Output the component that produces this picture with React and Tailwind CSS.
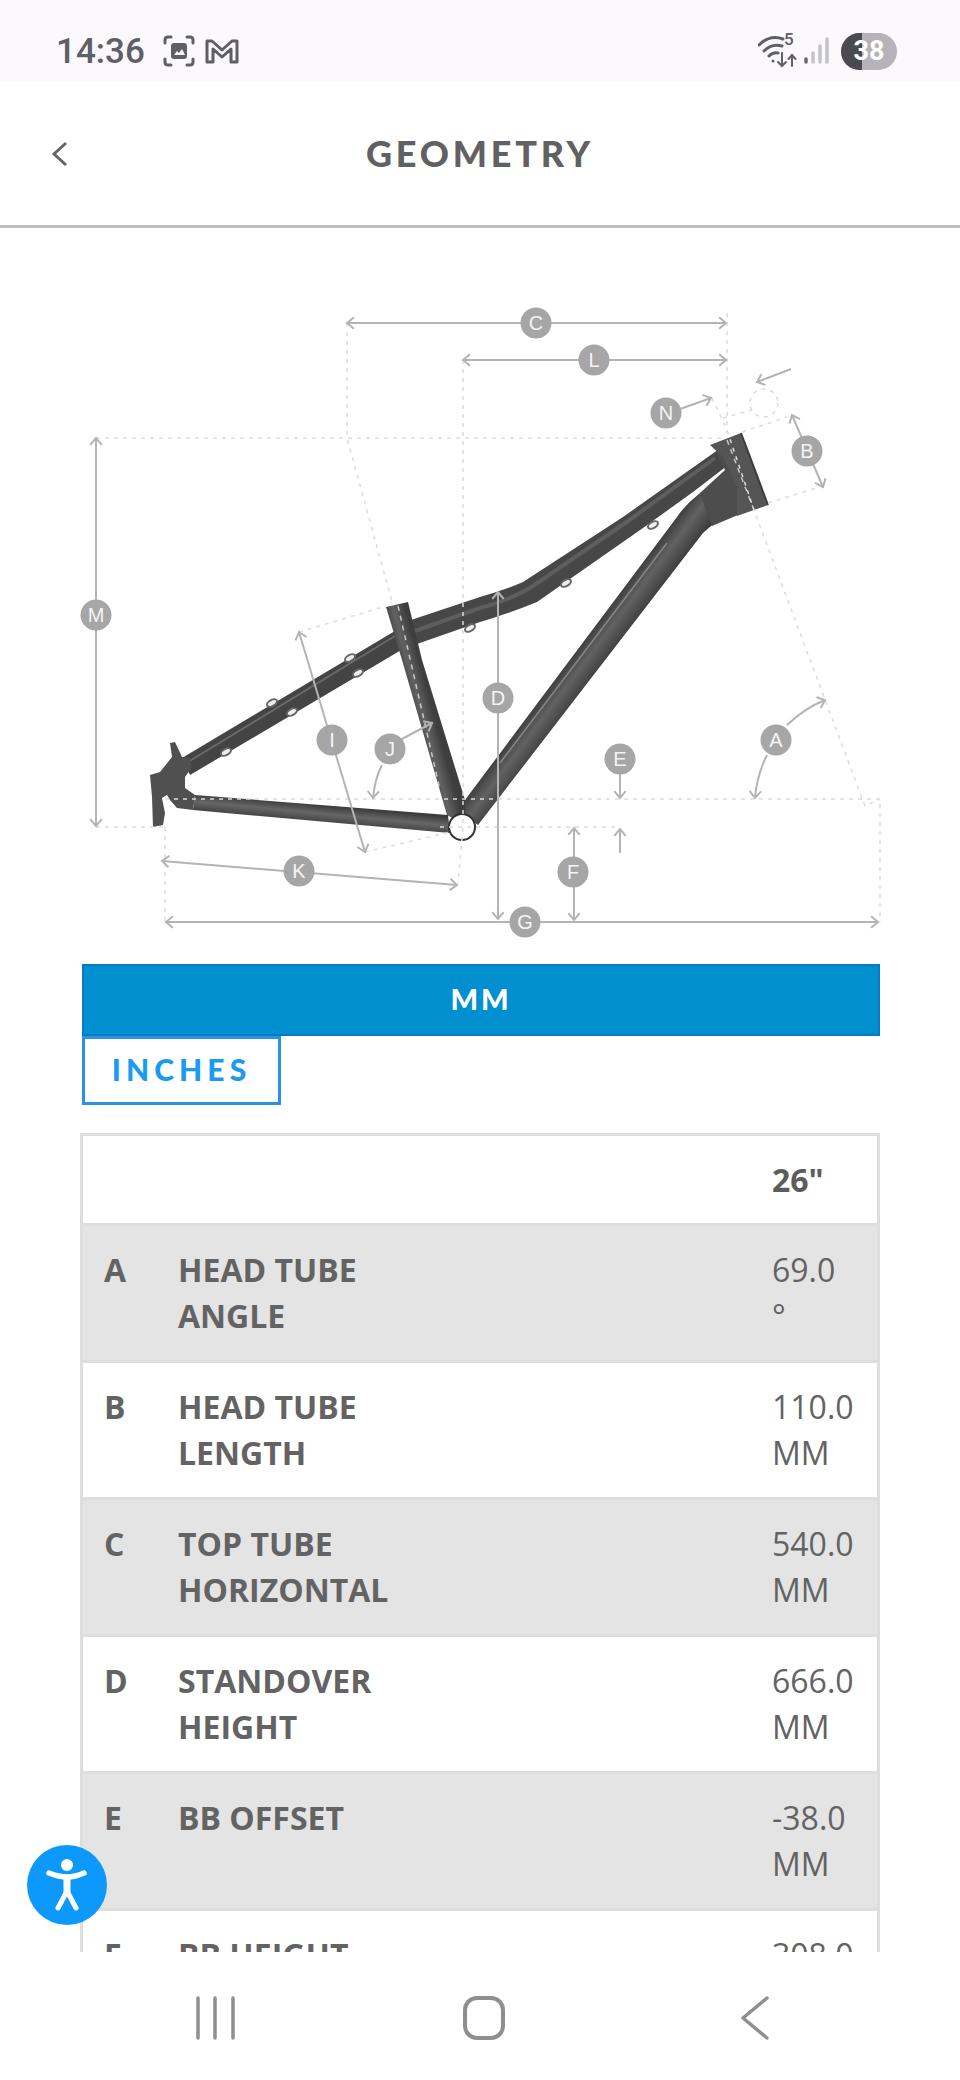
const rows = [
  { id: "A", name: "HEAD TUBE ANGLE", value: "69.0 °" },
  { id: "B", name: "HEAD TUBE LENGTH", value: "110.0 MM" },
  { id: "C", name: "TOP TUBE HORIZONTAL", value: "540.0 MM" },
  { id: "D", name: "STANDOVER HEIGHT", value: "666.0 MM" },
  { id: "E", name: "BB OFFSET", value: "-38.0 MM" },
  { id: "F", name: "BB HEIGHT", value: "308.0 MM" },
];

// straight dimension lines, last point gets the arrow head
const arrows = [
  [347, 323, 726, 323, true],
  [463, 360, 726, 360, true],
  [680, 409, 711, 398],
  [791, 369, 757, 382],
  [792, 415, 823, 487, true],
  [96, 438, 96, 826, true],
  [299, 632, 365, 852, true],
  [400, 740, 432, 723],
  [162, 861, 457, 885, true],
  [498, 592, 498, 919, true],
  [166, 922, 878, 922, true],
  [620, 770, 620, 798],
  [620, 853, 620, 829],
  [574, 828, 574, 920, true],
];

const dashes = [
  "M347 323V438L393 605",
  "M463 360V827L458 883",
  "M727 313V433",
  "M96 438H725",
  "M96 827H165M165 827V922M440 827H620",
  "M165 799H880V922",
  "M712 398L727 430L755 513L865 806L880 799",
  "M299 632L386 606",
  "M365 852L450 832",
  "M723 418L752 410",
  "M742 432L787 417",
  "M768 503L820 487",
];

const labels = [
  ["A", 776, 740], ["B", 807, 451], ["C", 536, 323], ["D", 498, 698], ["E", 620, 759],
  ["F", 573, 872], ["G", 525, 922], ["I", 332, 740], ["J", 390, 749], ["K", 299, 871],
  ["L", 594, 360], ["M", 96, 615], ["N", 666, 413],
];

const bosses = [
  [653, 525], [566, 583], [470, 628], [350, 658], [358, 673], [272, 703], [292, 712], [226, 752],
];

function ArrowHead({ x1, y1, x2, y2, size = 9 }) {
  const a = Math.atan2(y2 - y1, x2 - x1);
  const p = (d) => `${x2 + size * Math.cos(a + d)} ${y2 + size * Math.sin(a + d)}`;
  return <path d={`M${p(2.45)}L${x2} ${y2}L${p(-2.45)}`} fill="none" />;
}

function Diagram() {
  return (
    <svg width="960" height="736" viewBox="0 228 960 736" className="block shrink-0">
      <defs>
        <linearGradient id="down" gradientUnits="userSpaceOnUse" x1="568" y1="658" x2="596" y2="679">
          <stop offset="0" stopColor="#383838" />
          <stop offset="0.45" stopColor="#626262" />
          <stop offset="1" stopColor="#3a3a3a" />
        </linearGradient>
        <linearGradient id="stay" gradientUnits="userSpaceOnUse" x1="300" y1="803" x2="298" y2="824">
          <stop offset="0" stopColor="#3c3c3c" />
          <stop offset="0.4" stopColor="#666666" />
          <stop offset="1" stopColor="#353535" />
        </linearGradient>
        <linearGradient id="seat" gradientUnits="userSpaceOnUse" x1="412" y1="720" x2="434" y2="714">
          <stop offset="0" stopColor="#3e3e3e" />
          <stop offset="0.5" stopColor="#626262" />
          <stop offset="1" stopColor="#3e3e3e" />
        </linearGradient>
      </defs>

      {/* frame */}
      <path d="M400 628L182 758L190 775L408 646Z" fill="#444444" />
      <path d="M395 636L188 762" stroke="#6a6a6a" strokeWidth="2" fill="none" />
      <path d="M195 795L448 815L450 833L193 810Z" fill="url(#stay)" />
      <path
        d="M170 743L175 742L182 757L190 758L192 767L185 777L185 788L195 795L193 810L177 808L170 800L167 795L162 798L165 813L163 825L153 827L152 797L150 775L160 772L172 757Z"
        fill="#505050"
      />
      <path d="M722 447L623 517L523 582Q505 590 480 597L405 622L414 645L480 622Q505 615 537 602L643 528L693 492L732 462Z" fill="#474747" />
      <path d="M715 458L628 521L530 588Q505 602 480 608L412 632" fill="none" stroke="#5e5e5e" strokeWidth="4" />
      <path d="M700 493Q685 505 677 517L465 800V815L478 825L703 533Q720 517 740 510L735 475Z" fill="url(#down)" />
      <path d="M667 543L500 763" fill="none" stroke="#888888" strokeWidth="1.5" />
      <path d="M386 607L408 602L422 660L465 800V825L447 815L402 660Z" fill="url(#seat)" />
      <path d="M716 452L745 445L745 512L712 526L700 493L725 470Z" fill="#4d4d4d" />
      <path d="M710 445L741 433L768 505L737 516L737 487L723 457Z" fill="#555555" />
      <path d="M741 433L768 505" stroke="#3d3d3d" strokeWidth="2" />
      <path d="M727 440L754 510M398 606L440 790" stroke="#c8c8c8" strokeWidth="1.5" strokeDasharray="5 5" fill="none" />
      {bosses.map(([x, y]) => (
        <ellipse key={`${x}-${y}`} cx={x} cy={y} rx="5.500" ry="3" transform={`rotate(-30 ${x} ${y})`} fill="#eeeeee" stroke="#666666" strokeWidth="2" />
      ))}
      <circle cx="462" cy="827" r="13" fill="#ffffff" stroke="#333333" strokeWidth="2" />

      {/* dotted construction lines */}
      <g fill="none" stroke="#dcdcdc" strokeWidth="1.5" strokeDasharray="4 5">
        {dashes.map((d) => (
          <path key={d} d={d} />
        ))}
        <circle cx="764" cy="403" r="14" />
      </g>

      {/* dimensions */}
      <g fill="none" stroke="#b4b4b4" strokeWidth="2">
        {arrows.map(([x1, y1, x2, y2, both]) => (
          <g key={`${x1}-${y1}`}>
            <path d={`M${x1} ${y1}L${x2} ${y2}`} />
            <ArrowHead x1={x1} y1={y1} x2={x2} y2={y2} />
            {both && <ArrowHead x1={x2} y1={y2} x2={x1} y2={y1} />}
          </g>
        ))}
        <path d="M787 725Q805 708 825 700" />
        <ArrowHead x1={805} y1={708} x2={825} y2={700} />
        <path d="M767 755Q757 775 755 798" />
        <ArrowHead x1={756} y1={775} x2={755} y2={798} />
        <path d="M382 765Q375 778 373 798" />
        <ArrowHead x1={374} y1={778} x2={373} y2={798} />
      </g>

      {labels.map(([t, x, y]) => (
        <g key={t}>
          <circle cx={x} cy={y} r="15.5" fill="#a6a6a6" />
          <text x={x} y={y + 7} textAnchor="middle" fill="#f4f4f4" fontSize="20" fontFamily="'Liberation Sans', sans-serif">
            {t}
          </text>
        </g>
      ))}
    </svg>
  );
}

function StatusBar() {
  return (
    <div className="h-[82px] shrink-0 bg-[#fbf9fe] flex items-center pl-[56px] pr-[63px] pt-[20px] text-[#5f5f66]">
      <span className="text-[35px] font-medium leading-none font-['Roboto',sans-serif]">14:36</span>
      <svg width="34" height="34" viewBox="0 0 34 34" className="ml-[17px]" fill="none" stroke="#5f5f66" strokeWidth="3" strokeLinecap="round">
        <path d="M3 9V6Q3 3 6 3H9M25 3H28Q31 3 31 6V9M31 25V28Q31 31 28 31H25M9 31H6Q3 31 3 28V25" />
        <rect x="9" y="9" width="16" height="16" rx="3" fill="#5f5f66" stroke="none" />
        <path d="M12 21L15 17L17 19L20 15L23 21Z" fill="#fbf9fe" stroke="none" />
      </svg>
      <svg width="34" height="26" viewBox="0 0 34 26" className="ml-[9px]" fill="none" stroke="#5f5f66" strokeWidth="3" strokeLinejoin="round">
        <path d="M2 24V3H7L17 12L27 3H32V24H26V11L17 19L8 11V24Z" />
      </svg>
      <div className="ml-auto flex items-center">
        <div className="relative w-[40px] h-[34px]">
          <svg width="40" height="34" viewBox="0 0 40 34" fill="none" stroke="#5f5f66" strokeWidth="3" strokeLinecap="round">
            <path d="M1 11Q12 0 25 5M6 17Q14 9 24 12M11 22Q15 18 20 19" />
            <circle cx="15" cy="27" r="1.5" fill="#5f5f66" stroke="none" />
            <path d="M24 19V32M20 28L24 32L28 28M34 32V22M30.500 25L34 21L37.500 25" strokeWidth="2" />
          </svg>
          <span className="absolute left-[26px] top-[-3px] text-[17px] leading-none font-medium font-['Roboto',sans-serif]">5</span>
        </div>
        <svg width="28" height="28" viewBox="0 0 28 28" className="ml-[6px]" fill="none" strokeWidth="3.500" strokeLinecap="round">
          <path d="M2 22V25" stroke="#66666c" />
          <path d="M9 16V25M16 9V25M23 2V25" stroke="#c4c3c8" />
        </svg>
        <div className="ml-[9px] relative w-[56px] h-[37px] rounded-full overflow-hidden bg-[#b5b3b9] flex items-center justify-center">
          <div className="absolute left-0 top-0 bottom-0 w-[21px] bg-[#4b4a52]" />
          <span className="relative text-[27px] font-bold leading-none text-white font-['Roboto',sans-serif]">38</span>
        </div>
      </div>
    </div>
  );
}

export default function App() {
  return (
    <div className="relative w-[960px] h-[2080px] bg-white flex flex-col overflow-hidden font-['Open_Sans',sans-serif] text-[#636363]">
      <StatusBar />

      <header className="relative h-[146px] shrink-0 border-b-[3px] border-[#bdbdbd] flex items-center justify-center pb-[2px]">
        <svg width="18" height="26" viewBox="0 0 18 26" fill="none" stroke="#666666" strokeWidth="3" className="absolute left-[51px] top-[59px]">
          <path d="M15 2L3 13L15 24" />
        </svg>
        <h1 className="text-[36px] font-black tracking-[0.105em] leading-none font-['Lato',sans-serif] text-[#616161]">GEOMETRY</h1>
      </header>

      <Diagram />

      <div className="pl-[82px] pr-[80px] shrink-0 font-['Lato',sans-serif] font-black">
        <div className="h-[72px] bg-[#0090d0] border-2 border-[#0a79c4] text-white text-[29px] tracking-[0.1em] flex items-center justify-center pb-[3px]">MM</div>
        <div className="w-[199px] h-[69px] border-[3px] border-[#2a94e2] text-[#1a9bf0] text-[30px] tracking-[0.17em] flex items-center justify-center pb-[2px]">INCHES</div>
      </div>

      <main className="flex-1 min-h-0 overflow-hidden pl-[80px] pr-[80px] pt-[28px]">
        <div className="border-[3px] border-b-0 border-[#dedede] text-[32px] leading-[46px]">
          <div className="h-[90px] border-b-[3px] border-[#dedede] flex items-center pl-[689px]">
            <span className="font-bold text-[#5c5c5c]">26&quot;</span>
          </div>
          {rows.map((r, i) => (
            <div key={r.id} className={`h-[137px] border-b-[3px] border-[#dedede] flex pt-[21px] ${i % 2 === 0 ? "bg-[#e4e4e4]" : "bg-white"}`}>
              <div className="w-[95px] pl-[21px] shrink-0 font-bold">{r.id}</div>
              <div className="w-[594px] pr-[330px] shrink-0 font-bold">{r.name}</div>
              <div className="w-[100px] shrink-0">
                {r.value.split(" ").map((part) => (
                  <div key={part}>{part}</div>
                ))}
              </div>
            </div>
          ))}
        </div>
      </main>

      <nav className="h-[128px] shrink-0 bg-white relative flex items-start pt-[44px] pl-[195px]">
        <svg width="42" height="44" viewBox="0 0 42 44" fill="none" stroke="#8f8f8f" strokeWidth="3.500" strokeLinecap="round">
          <path d="M3 2V42M20 2V42M38 2V42" />
        </svg>
        <svg width="44" height="44" viewBox="0 0 44 44" fill="none" stroke="#8f8f8f" strokeWidth="4" className="ml-[225px]">
          <rect x="3" y="2" width="38" height="40" rx="12" />
        </svg>
        <svg width="30" height="44" viewBox="0 0 30 44" fill="none" stroke="#8f8f8f" strokeWidth="3.500" strokeLinecap="round" strokeLinejoin="round" className="ml-[234px]">
          <path d="M27 2L3 22L27 42" />
        </svg>
      </nav>

      <div className="absolute left-[27px] top-[1845px] w-[80px] h-[80px] rounded-full bg-[#0d99fc]">
        <svg width="80" height="80" viewBox="0 0 80 80" fill="none" stroke="white" strokeLinecap="round">
          <circle cx="40" cy="20" r="6" fill="white" stroke="none" />
          <path d="M22 28Q32 32 40 32Q48 32 57 28" strokeWidth="5.500" />
          <path d="M40 33V48" strokeWidth="7" />
          <path d="M39 48L31 63M41 48L49 63" strokeWidth="5" />
        </svg>
      </div>
    </div>
  );
}
